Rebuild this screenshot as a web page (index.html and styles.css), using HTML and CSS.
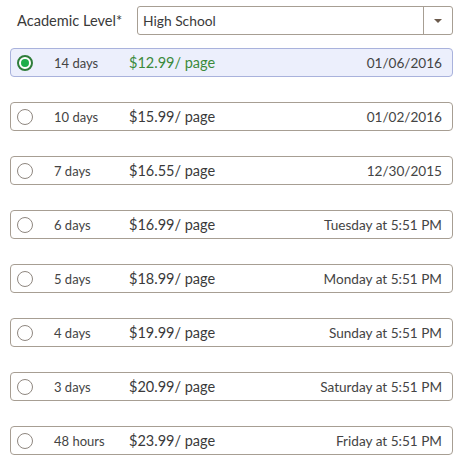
FILE: index.html
```html
<!DOCTYPE html>
<html lang="en">
<head>
    <meta charset="UTF-8">
    <meta name="viewport" content="width=device-width, initial-scale=1.0">
    <title>Deadline</title>
    <link rel="stylesheet" href="styles.css">
</head>
<body>
    <div class="container">
        <div class="level-row">
            <label class="level-label">Academic Level*</label>
            <div class="select">
                <span class="select-value">High School</span>
                <span class="select-arrow"></span>
            </div>
        </div>
        <div class="options">
            <div class="option selected">
                <span class="radio"></span>
                <span class="days">14 days</span>
                <span class="price">$12.99/ page</span>
                <span class="date">01/06/2016</span>
            </div>
            <div class="option">
                <span class="radio"></span>
                <span class="days">10 days</span>
                <span class="price">$15.99/ page</span>
                <span class="date">01/02/2016</span>
            </div>
            <div class="option">
                <span class="radio"></span>
                <span class="days">7 days</span>
                <span class="price">$16.55/ page</span>
                <span class="date">12/30/2015</span>
            </div>
            <div class="option">
                <span class="radio"></span>
                <span class="days">6 days</span>
                <span class="price">$16.99/ page</span>
                <span class="date">Tuesday at 5:51 PM</span>
            </div>
            <div class="option">
                <span class="radio"></span>
                <span class="days">5 days</span>
                <span class="price">$18.99/ page</span>
                <span class="date">Monday at 5:51 PM</span>
            </div>
            <div class="option">
                <span class="radio"></span>
                <span class="days">4 days</span>
                <span class="price">$19.99/ page</span>
                <span class="date">Sunday at 5:51 PM</span>
            </div>
            <div class="option">
                <span class="radio"></span>
                <span class="days">3 days</span>
                <span class="price">$20.99/ page</span>
                <span class="date">Saturday at 5:51 PM</span>
            </div>
            <div class="option">
                <span class="radio"></span>
                <span class="days">48 hours</span>
                <span class="price">$23.99/ page</span>
                <span class="date">Friday at 5:51 PM</span>
            </div>
        </div>
    </div>
</body>
</html>
```

FILE: styles.css
```css
body {
    font-family: Lato, "Open Sans", sans-serif;
    background-color: #fff;
    color: #333;
    margin: 0;
}
.container {
    padding: 6px 11px 0 10px;
}
.level-row {
    display: flex;
    align-items: center;
    height: 29px;
}
.level-label {
    width: 127px;
    padding-left: 7px;
    box-sizing: border-box;
    font-size: 14.6px;
    color: #3a3a3a;
}
.select {
    flex: 1;
    display: flex;
    align-items: stretch;
    height: 29px;
    box-sizing: border-box;
    border: 1px solid #a79e93;
    border-radius: 3px;
}
.select-value {
    flex: 1;
    display: flex;
    align-items: center;
    padding-left: 5px;
    font-size: 13.8px;
    color: #3a3a3a;
}
.select-arrow {
    width: 28px;
    border-left: 1px solid #a79e93;
    display: flex;
    align-items: center;
    justify-content: center;
}
.select-arrow::after {
    content: "";
    border-left: 4px solid transparent;
    border-right: 4px solid transparent;
    border-top: 4px solid #6b5a4c;
}
.options {
    display: flex;
    flex-direction: column;
    gap: 25px;
    margin-top: 13px;
}
.option {
    display: flex;
    align-items: center;
    height: 29px;
    box-sizing: border-box;
    border: 1px solid #a79e93;
    border-radius: 4px;
    padding: 0 10px 0 6px;
}
.option.selected {
    background-color: #eceffc;
    border-color: #a9b2dc;
}
.radio {
    width: 16px;
    height: 16px;
    box-sizing: border-box;
    border: 1px solid #8f8780;
    border-radius: 50%;
    background-color: #fff;
    margin-right: 21px;
    display: flex;
    align-items: center;
    justify-content: center;
}
.selected .radio {
    border: 2px solid #2f7d3a;
}
.selected .radio::after {
    content: "";
    width: 8px;
    height: 8px;
    border-radius: 50%;
    background-color: #1fae4a;
}
.days {
    width: 75px;
    font-size: 13px;
    color: #444;
}
.price {
    flex: 1;
    font-size: 14.5px;
    color: #3a3a3a;
}
.selected .price {
    color: #3b8a3b;
}
.date {
    font-size: 13.6px;
    color: #444;
}
```
